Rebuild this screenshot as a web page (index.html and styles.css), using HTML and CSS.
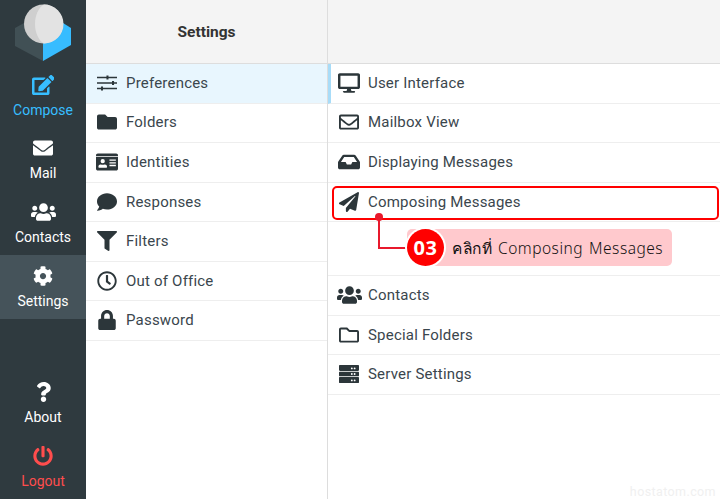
FILE: index.html
```html
<!DOCTYPE html>
<html lang="en">
  <head>
    <meta charset="UTF-8" />
    <meta name="viewport" content="width=device-width, initial-scale=1.0" />
    <title>Settings</title>
    <link rel="stylesheet" href="styles.css">
  </head>
  <body>
    <nav class="side">
      <div class="logo">
        <svg width="86" height="63" viewBox="0 0 86 63">
          <polygon points="15,28 24,23 43,43 43,61 15,46" fill="#415055"/>
          <polygon points="71,28 63,23 43,43 43,61 71,45" fill="#37bcff"/>
          <circle cx="43.5" cy="24" r="19.5" fill="#cfcfcf"/>
          <path d="M44 4.5a19.5 19.5 0 0 1 0 39c-5.500-3-9-11-9-19.500s3.500-16.500 9-19.500z" fill="#e3e3e3"/>
        </svg>
      </div>
      <a class="nav-item compose">
        <svg class="nav-icon" viewBox="0 0 576 512"><path d="M402.6 83.2l90.2 90.2c3.8 3.8 3.8 10 0 13.8L274.4 405.6l-92.8 10.3c-12.4 1.4-22.9-9.1-21.5-21.5l10.3-92.8L388.8 83.2c3.8-3.8 10-3.8 13.8 0zm162-22.9l-48.8-48.8c-15.2-15.2-39.9-15.2-55.2 0l-35.4 35.4c-3.8 3.8-3.8 10 0 13.8l90.2 90.2c3.8 3.8 10 3.8 13.8 0l35.4-35.4c15.2-15.3 15.2-40 0-55.2zM384 346.2V448H64V128h229.8c3.2 0 6.2-1.3 8.5-3.5l40-40c7.6-7.6 2.2-20.5-8.5-20.5H48C21.5 64 0 85.5 0 112v352c0 26.5 21.5 48 48 48h352c26.5 0 48-21.5 48-48V306.2c0-10.7-12.9-16-20.5-8.5l-40 40c-2.2 2.3-3.5 5.3-3.5 8.5z"/></svg>
        <span>Compose</span>
      </a>
      <a class="nav-item">
        <svg class="nav-icon" viewBox="0 0 512 512"><path d="M502.3 190.8c3.9-3.1 9.7-.2 9.7 4.7V400c0 26.5-21.5 48-48 48H48c-26.5 0-48-21.5-48-48V195.6c0-5 5.7-7.8 9.7-4.7 22.4 17.4 52.1 39.5 154.1 113.6 21.1 15.4 56.7 47.8 92.2 47.6 35.7.3 72-32.8 92.3-47.6 102-74.1 131.6-96.3 154-113.7zM256 320c23.2.4 56.6-29.2 73.4-41.4 132.7-96.3 142.8-104.7 173.4-128.7 5.8-4.5 9.2-11.5 9.2-18.9v-19c0-26.5-21.5-48-48-48H48C21.5 64 0 85.5 0 112v19c0 7.4 3.4 14.3 9.2 18.9 30.6 23.9 40.7 32.4 173.4 128.7 16.8 12.2 50.2 41.8 73.4 41.4z"/></svg>
        <span>Mail</span>
      </a>
      <a class="nav-item">
        <svg class="nav-icon" viewBox="0 0 640 512"><path d="M96 224c35.3 0 64-28.7 64-64s-28.7-64-64-64-64 28.7-64 64 28.7 64 64 64zm448 0c35.3 0 64-28.7 64-64s-28.7-64-64-64-64 28.7-64 64 28.7 64 64 64zm32 32h-64c-17.6 0-33.5 7.1-45.1 18.6 40.3 22.1 68.9 62 75.1 109.4h66c17.7 0 32-14.3 32-32v-32c0-35.3-28.7-64-64-64zm-256 0c61.9 0 112-50.1 112-112S381.9 32 320 32 208 82.1 208 144s50.1 112 112 112zm76.8 32h-8.3c-20.8 10-43.9 16-68.5 16s-47.6-6-68.5-16h-8.3C179.6 288 128 339.6 128 403.2V432c0 26.5 21.5 48 48 48h288c26.5 0 48-21.5 48-48v-28.8c0-63.6-51.6-115.2-115.2-115.2zm-223.7-13.4C161.5 263.1 145.6 256 128 256H64c-35.3 0-64 28.7-64 64v32c0 17.7 14.3 32 32 32h65.9c6.3-47.4 34.9-87.3 75.2-109.4z"/></svg>
        <span>Contacts</span>
      </a>
      <a class="nav-item active">
        <svg class="nav-icon" viewBox="0 0 512 512"><path d="M487.4 315.7l-42.6-24.6c4.3-23.2 4.3-47 0-70.2l42.6-24.6c4.9-2.8 7.1-8.6 5.5-14-11.1-35.6-30-67.8-54.7-94.6-3.8-4.1-10-5.1-14.8-2.3L380.8 110c-17.9-15.4-38.5-27.3-60.8-35.1V25.8c0-5.6-3.9-10.5-9.4-11.7-36.7-8.2-74.3-7.8-109.2 0-5.5 1.2-9.4 6.1-9.4 11.7V75c-22.2 7.9-42.8 19.8-60.8 35.1L88.7 85.5c-4.9-2.8-11-1.9-14.8 2.3-24.7 26.7-43.6 58.9-54.7 94.6-1.7 5.4.6 11.2 5.5 14L67.3 221c-4.3 23.2-4.3 47 0 70.2l-42.6 24.6c-4.9 2.8-7.1 8.6-5.5 14 11.1 35.6 30 67.8 54.7 94.6 3.8 4.1 10 5.1 14.8 2.3l42.6-24.6c17.9 15.4 38.5 27.3 60.8 35.1v49.2c0 5.6 3.9 10.5 9.4 11.7 36.7 8.2 74.3 7.8 109.2 0 5.5-1.2 9.4-6.1 9.4-11.7v-49.2c22.2-7.9 42.8-19.8 60.8-35.1l42.6 24.6c4.9 2.8 11 1.9 14.8-2.3 24.7-26.7 43.6-58.9 54.7-94.6 1.5-5.5-.7-11.3-5.6-14.1zM256 336c-44.1 0-80-35.9-80-80s35.9-80 80-80 80 35.9 80 80-35.9 80-80 80z"/></svg>
        <span>Settings</span>
      </a>
      <a class="nav-item about">
        <svg class="nav-icon" viewBox="0 0 384 512"><path d="M202.021 0C122.202 0 70.503 32.703 29.914 91.026c-7.363 10.58-5.093 25.086 5.178 32.874l43.138 32.709c10.373 7.865 25.132 6.026 33.253-4.148 25.049-31.381 43.63-49.449 82.757-49.449 30.764 0 68.816 19.799 68.816 49.631 0 22.552-18.617 34.134-48.993 51.164-35.423 19.86-82.299 44.576-82.299 106.405V320c0 13.255 10.745 24 24 24h72.471c13.255 0 24-10.745 24-24v-5.773c0-42.86 125.268-44.645 125.268-160.627C377.504 66.256 286.902 0 202.021 0zM192 373.459c-38.196 0-69.271 31.075-69.271 69.271 0 38.195 31.075 69.27 69.271 69.27s69.271-31.075 69.271-69.271-31.075-69.27-69.271-69.27z"/></svg>
        <span>About</span>
      </a>
      <a class="nav-item logout">
        <svg class="nav-icon" viewBox="0 0 512 512"><path d="M400 54.1c63 45 104 118.6 104 201.9 0 136.8-110.8 247.7-247.5 248C120 504.3 8.2 393 8 256.4 7.9 173.1 48.9 99.3 111.8 54.2c11.7-8.3 28-4.8 35 7.7L162.6 90c5.9 10.5 3.1 23.8-6.6 31-41.5 30.8-68 79.6-68 134.9-.1 92.3 74.5 168.1 168 168.1 91.6 0 168.6-74.2 168-169.1-.3-51.8-24.7-101.8-68.1-134-9.7-7.2-12.4-20.5-6.5-30.9l15.8-28.1c7-12.4 23.2-16.1 34.8-7.8zM296 264V24c0-13.3-10.7-24-24-24h-32c-13.3 0-24 10.7-24 24v240c0 13.3 10.7 24 24 24h32c13.3 0 24-10.7 24-24z"/></svg>
        <span>Logout</span>
      </a>
    </nav>

    <section class="col-sections">
      <header class="col-header"><span class="col-title">Settings</span></header>
      <ul class="rows">
        <li class="row selected">
          <svg class="row-icon" viewBox="0 0 512 512"><path d="M0 96h512v40H0zM0 236h512v40H0zM0 378h512v40H0z"/><path d="M242 66h52v100h-52zM384 206h52v100h-52zM102 348h52v100h-52z"/></svg>
          Preferences
        </li>
        <li class="row">
          <svg class="row-icon" viewBox="0 0 512 512"><path d="M464 128H272l-64-64H48C21.49 64 0 85.49 0 112v288c0 26.51 21.49 48 48 48h416c26.51 0 48-21.49 48-48V176c0-26.51-21.49-48-48-48z"/></svg>
          Folders
        </li>
        <li class="row">
          <svg class="row-icon wide" viewBox="0 0 576 512">
            <path d="M48 32h480c26.500 0 48 21.500 48 48v352c0 26.500-21.500 48-48 48H48c-26.500 0-48-21.500-48-48V80c0-26.500 21.500-48 48-48z"/>
            <path fill="#fff" d="M0 104h576v24H0zM176 290a56 56 0 1 0 0-112 56 56 0 0 0 0 112zM78 404c-8 0-14-6-14-14v-16c0-30 24-54 54-54h8c16 7 32 10 50 10s34-3 50-10h8c30 0 54 24 54 54v16c0 8-6 14-14 14zM352 190h168v36H352zM352 260h168v36H352zM352 330h168v36H352z"/>
          </svg>
          Identities
        </li>
        <li class="row">
          <svg class="row-icon" viewBox="0 0 512 512"><path d="M256 32C114.6 32 0 125.1 0 240c0 49.6 21.4 95 57 130.7C44.5 421.1 2.7 466 2.2 466.5c-2.2 2.3-2.8 5.7-1.5 8.7S4.8 480 8 480c66.3 0 116-31.8 140.6-51.4 32.7 12.3 69 19.4 107.4 19.4 141.4 0 256-93.1 256-208S397.4 32 256 32z"/></svg>
          Responses
        </li>
        <li class="row">
          <svg class="row-icon" viewBox="0 0 512 512"><path d="M487.976 0H24.028C2.71 0-8.047 25.866 7.058 40.971L192 225.941V432c0 7.831 3.821 15.17 10.237 19.662l80 55.98C298.02 518.69 320 507.493 320 487.98V225.941l184.947-184.97C520.021 25.896 509.338 0 487.976 0z"/></svg>
          Filters
        </li>
        <li class="row">
          <svg class="row-icon" viewBox="0 0 512 512"><path d="M256 8C119 8 8 119 8 256s111 248 248 248 248-111 248-248S393 8 256 8zm0 448c-110.5 0-200-89.5-200-200S145.5 56 256 56s200 89.5 200 200-89.5 200-200 200zm61.8-104.4l-84.9-61.7c-3.1-2.3-4.9-5.9-4.9-9.7V116c0-6.6 5.4-12 12-12h32c6.6 0 12 5.4 12 12v141.7l66.8 48.6c5.4 3.9 6.5 11.4 2.6 16.8L334.6 349c-3.9 5.3-11.4 6.5-16.8 2.6z"/></svg>
          Out of Office
        </li>
        <li class="row">
          <svg class="row-icon" viewBox="0 0 448 512"><path d="M400 224h-24v-72C376 68.2 307.8 0 224 0S72 68.2 72 152v72H48c-26.5 0-48 21.5-48 48v192c0 26.5 21.5 48 48 48h352c26.5 0 48-21.5 48-48V272c0-26.5-21.5-48-48-48zm-104 0H152v-72c0-39.7 32.3-72 72-72s72 32.3 72 72v72z"/></svg>
          Password
        </li>
      </ul>
    </section>

    <section class="col-forms">
      <header class="col-header"></header>
      <ul class="rows">
        <li class="row selected">
          <svg class="row-icon wide" viewBox="0 0 576 512"><path d="M528 0H48C21.5 0 0 21.5 0 48v320c0 26.5 21.5 48 48 48h192l-16 48h-72c-13.3 0-24 10.7-24 24s10.7 24 24 24h272c13.3 0 24-10.7 24-24s-10.7-24-24-24h-72l-16-48h192c26.5 0 48-21.5 48-48V48c0-26.5-21.5-48-48-48zm-16 352H64V64h448v288z"/></svg>
          User Interface
        </li>
        <li class="row">
          <svg class="row-icon" viewBox="0 0 512 512"><path d="M464 64H48C21.49 64 0 85.49 0 112v288c0 26.51 21.49 48 48 48h416c26.51 0 48-21.49 48-48V112c0-26.51-21.49-48-48-48zm0 48v40.805c-22.422 18.259-58.168 46.651-134.587 106.49-16.841 13.247-50.201 45.072-73.413 44.701-23.208.375-56.579-31.459-73.413-44.701C106.18 199.465 70.425 171.067 48 152.805V112h416zM48 400V214.398c22.914 18.251 55.409 43.862 104.938 82.646 21.857 17.205 60.134 55.186 103.062 54.955 42.717.231 80.509-37.199 103.053-54.947 49.528-38.783 82.032-64.401 104.947-82.653V400H48z"/></svg>
          Mailbox View
        </li>
        <li class="row">
          <svg class="row-icon wide" viewBox="0 0 576 512"><path d="M567.938 243.908L462.25 85.374A48.003 48.003 0 0 0 422.311 64H153.689a48 48 0 0 0-39.938 21.374L8.062 243.908A47.994 47.994 0 0 0 0 270.533V400c0 26.51 21.49 48 48 48h480c26.51 0 48-21.49 48-48V270.533a47.994 47.994 0 0 0-8.062-26.625zM162.252 128h251.497l85.333 128H376l-32 64H232l-32-64H76.918l85.334-128z"/></svg>
          Displaying Messages
        </li>
        <li class="row composing">
          <svg class="row-icon" viewBox="0 0 512 512"><path d="M476 3.2L12.5 270.6c-18.1 10.4-15.8 35.6 2.2 43.2L121 358.4l287.3-253.2c5.5-4.9 13.3 2.6 8.6 8.3L176 407v80.5c0 23.6 28.5 32.9 42.5 15.8L282 426l124.6 52.2c14.2 6 30.4-2.9 33-18.2l72-432C515 7.8 493.3-6.8 476 3.2z"/></svg>
          Composing Messages
          <span class="mark-box"></span>
        </li>
        <li class="row row-callout">
          <span class="dot"></span>
          <span class="elbow"></span>
          <div class="callout">
            <span class="step">03</span>
            <span class="callout-text">คลิกที่ Composing Messages</span>
          </div>
        </li>
        <li class="row">
          <svg class="row-icon wider" viewBox="0 0 640 512"><path d="M96 224c35.3 0 64-28.7 64-64s-28.7-64-64-64-64 28.7-64 64 28.7 64 64 64zm448 0c35.3 0 64-28.7 64-64s-28.7-64-64-64-64 28.7-64 64 28.7 64 64 64zm32 32h-64c-17.6 0-33.5 7.1-45.1 18.6 40.3 22.1 68.9 62 75.1 109.4h66c17.7 0 32-14.3 32-32v-32c0-35.3-28.7-64-64-64zm-256 0c61.9 0 112-50.1 112-112S381.9 32 320 32 208 82.1 208 144s50.1 112 112 112zm76.8 32h-8.3c-20.8 10-43.9 16-68.5 16s-47.6-6-68.5-16h-8.3C179.6 288 128 339.6 128 403.2V432c0 26.5 21.5 48 48 48h288c26.5 0 48-21.5 48-48v-28.8c0-63.6-51.6-115.2-115.2-115.2zm-223.7-13.4C161.5 263.1 145.6 256 128 256H64c-35.3 0-64 28.7-64 64v32c0 17.7 14.3 32 32 32h65.9c6.3-47.4 34.9-87.3 75.2-109.4z"/></svg>
          Contacts
        </li>
        <li class="row">
          <svg class="row-icon" viewBox="0 0 512 512"><path d="M464 128H272l-54.63-54.63c-6-6-14.14-9.37-22.63-9.37H48C21.49 64 0 85.49 0 112v288c0 26.51 21.49 48 48 48h416c26.51 0 48-21.49 48-48V176c0-26.51-21.49-48-48-48zm0 272H48V112h140.12l54.63 54.63c6 6 14.14 9.37 22.63 9.37H464v224z"/></svg>
          Special Folders
        </li>
        <li class="row">
          <svg class="row-icon" viewBox="0 0 512 512"><path fill-rule="evenodd" d="M24 24h464c13 0 24 11 24 24v108c0 13-11 24-24 24H24c-13 0-24-11-24-24V48c0-13 11-24 24-24zm376 64a24 24 0 1 0 0 48 24 24 0 0 0 0-48zm-72 0a24 24 0 1 0 0 48 24 24 0 0 0 0-48zM24 196h464c13 0 24 11 24 24v72c0 13-11 24-24 24H24c-13 0-24-11-24-24v-72c0-13 11-24 24-24zm376 36a24 24 0 1 0 0 48 24 24 0 0 0 0-48zm-72 0a24 24 0 1 0 0 48 24 24 0 0 0 0-48zM24 332h464c13 0 24 11 24 24v108c0 13-11 24-24 24H24c-13 0-24-11-24-24V356c0-13 11-24 24-24zm376 64a24 24 0 1 0 0 48 24 24 0 0 0 0-48zm-72 0a24 24 0 1 0 0 48 24 24 0 0 0 0-48z"/></svg>
          Server Settings
        </li>
      </ul>
      <span class="watermark">hostatom.com</span>
    </section>
  </body>
</html>
```

FILE: styles.css
```css
* {
  box-sizing: border-box;
}
body {
  margin: 0;
  height: 499px;
  display: flex;
  overflow: hidden;
  background: #fff;
  color: #2c363a;
  font-family: Roboto, "Liberation Sans", sans-serif;
}

/* left dark menu */
.side {
  width: 86px;
  flex: none;
  display: flex;
  flex-direction: column;
  background: #2f3a3f;
}
.logo {
  height: 63px;
}
.logo svg {
  display: block;
}
.nav-item {
  height: 64px;
  padding-top: 11px;
  display: flex;
  flex-direction: column;
  align-items: center;
  color: #fff;
  font-size: 14px;
}
.nav-icon {
  height: 20px;
  margin-bottom: 7px;
  fill: currentColor;
}
.nav-item.compose {
  padding-top: 12px;
  color: #37beff;
}
.nav-item.active {
  background: #45535a;
}
.nav-item.about {
  margin-top: auto;
}
.nav-item.logout {
  color: #ff4d4d;
}

/* columns */
.col-sections {
  width: 242px;
  flex: none;
  border-right: 1px solid #ddd;
}
.col-forms {
  flex: 1;
  position: relative;
}
.col-header {
  height: 64px;
  display: flex;
  align-items: center;
  justify-content: center;
  background: #f4f4f4;
  border-bottom: 1px solid #ddd;
}
.col-title {
  padding-top: 1px;
  font-size: 15.5px;
  font-weight: 700;
  color: #333;
}
.rows {
  list-style: none;
  margin: 0;
  padding: 0;
}
.row {
  height: 39.55px;
  padding: 0 0 0.8px 11px;
  display: flex;
  align-items: center;
  gap: 9px;
  border-bottom: 1px solid #eee;
  font-size: 15px;
  letter-spacing: 0.2px;
  color: #3a464d;
  position: relative;
}
.row-icon {
  width: 20px;
  height: 20px;
  flex: none;
  fill: #2c363a;
}
.row-icon.wide {
  width: 22px;
  margin: 0 -1px;
}
.row-icon.wider {
  width: 25px;
  margin: 0 -2.5px;
}
.col-sections .selected {
  background: #e8f6fe;
}
.col-forms .selected {
  border-left: 3px solid #a8dcf8;
  padding-left: 8px;
}

/* red annotation */
.mark-box {
  position: absolute;
  left: 4px;
  right: 1px;
  top: 3px;
  height: 34px;
  border: 2px solid #f00;
  border-radius: 5px;
}
.row-callout {
  height: 54px;
  padding-left: 79px;
}
.dot {
  position: absolute;
  left: 47px;
  top: -9px;
  width: 8px;
  height: 8px;
  border-radius: 50%;
  background: #e8192c;
}
.elbow {
  position: absolute;
  left: 50px;
  top: -5px;
  width: 30px;
  height: 32px;
  border-left: 2px solid #e8192c;
  border-bottom: 2px solid #e8192c;
}
.callout {
  position: relative;
  height: 37px;
  margin-top: -2px;
  padding-right: 9px;
  display: flex;
  align-items: center;
  background: #ffc9cd;
  border-radius: 5px 5px 5px 18px;
}
.step {
  width: 37px;
  height: 37px;
  margin-right: 8px;
  display: flex;
  align-items: center;
  justify-content: center;
  border-radius: 50%;
  background: #f00;
  box-shadow: 0 0 0 2px #fff;
  color: #fff;
  font-family: "Noto Sans", sans-serif;
  font-size: 20px;
  font-weight: 700;
  letter-spacing: 0.5px;
}
.callout-text {
  padding-top: 2px;
  color: #111;
  font-size: 15.5px;
  font-weight: 300;
  letter-spacing: 0.5px;
  word-spacing: 1.5px;
  font-family: "Noto Sans", sans-serif;
}
.watermark {
  position: absolute;
  right: 4px;
  bottom: 0;
  color: #f0f0f0;
  font-size: 12.5px;
  letter-spacing: 0.4px;
}
```
